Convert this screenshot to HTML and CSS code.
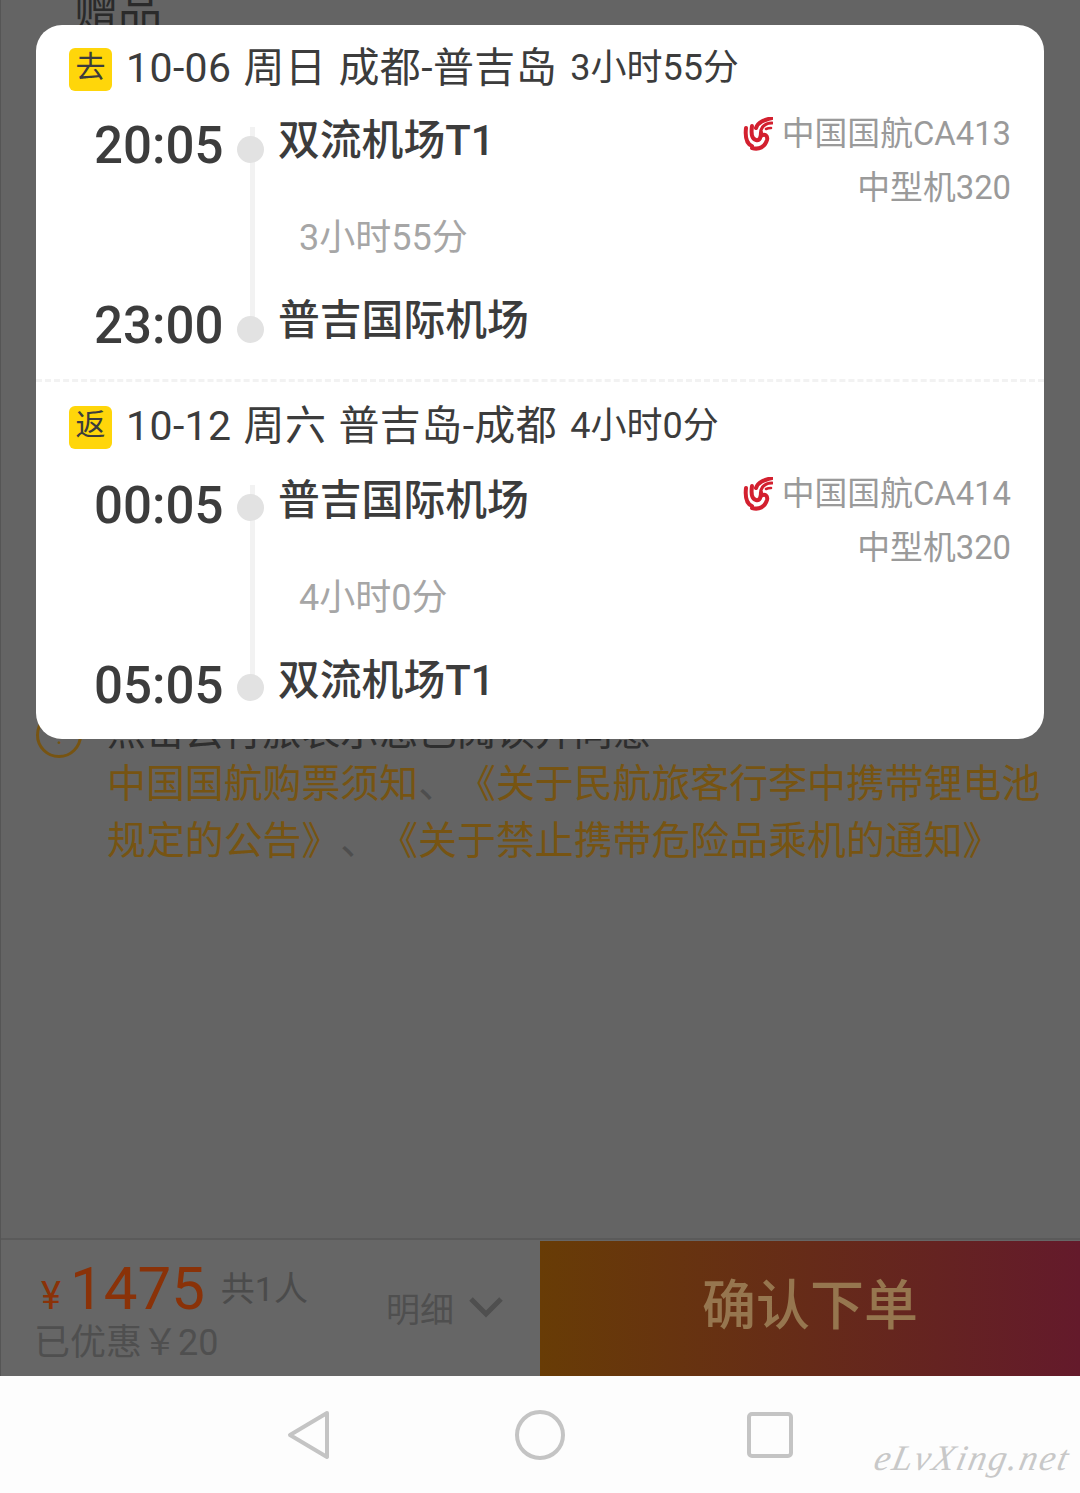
FILE: index.html
```html
<!DOCTYPE html>
<html lang="zh-CN">
<head>
  <meta charset="UTF-8" />
  <meta name="viewport" content="width=device-width, initial-scale=1.0"/>
  <title>确认订单</title>
  <link rel="stylesheet" href="styles.css">
</head>
<body>
  <svg class="defs">
    <symbol id="logo-ca" viewBox="0 0 30 34">
      <g fill="none" stroke="#d3202f" stroke-linecap="round">
        <path stroke-width="4" d="M3 11c-1 9 1 16 6 18"/>
        <path stroke-width="4" d="M9 9c-1 7 0 13 4 14 4 1 5-3 5-8"/>
        <path stroke-width="4" d="M13 11c2-6 8-8 16-10"/>
        <path stroke-width="3.2" d="M18 13c2-5 6-7 11-7"/>
        <path stroke-width="4" d="M9 31c7 2 13-1 15-8 1-4-2-7-6-4"/>
        <path stroke-width="2.6" d="M23 12c2-1 3-1 5-1"/>
      </g>
    </symbol>
  </svg>

  <div class="tela">
    <h2 class="gift">赠品</h2>

    <div class="terms">
      <span class="terms-icon">!</span>
      <div class="terms-text">
        <p class="terms-dark">点击云行旅表示您已阅读并同意</p>
        <p>中国国航购票须知<span class="sep">、</span>《关于民航旅客行李中携带锂电池</p>
        <p>规定的公告》<span class="sep">、</span>《关于禁止携带危险品乘机的通知》</p>
      </div>
    </div>

    <div class="bottom-bar">
      <div class="price-box">
        <div class="price-line">
          <span class="yen">¥</span><span class="price">1475</span><span class="people">共1人</span>
        </div>
        <div class="discount">已优惠￥20</div>
      </div>
      <div class="detail">
        明细
        <svg width="36" height="22" viewBox="0 0 36 22"><path d="M3 3l15 15L33 3" fill="none" stroke="#4f4f4f" stroke-width="5"/></svg>
      </div>
      <div class="confirm">确认下单</div>
    </div>

    <div class="card">
      <section class="segment">
        <div class="seg-head">
          <span class="tag">去</span>
          <span class="seg-title">10-06 周日 成都-普吉岛</span>
          <span class="seg-total">3小时55分</span>
        </div>
        <div class="route">
          <div class="time">20:05</div>
          <div class="rail"><i class="dot"></i><i class="dot"></i></div>
          <div class="airport">双流机场T1</div>
          <div class="carrier">
            <div class="carrier-line"><svg class="logo"><use href="#logo-ca"/></svg>中国国航CA413</div>
            <div class="carrier-line">中型机320</div>
          </div>
          <div class="duration">3小时55分</div>
          <div class="time last">23:00</div>
          <div class="airport last">普吉国际机场</div>
        </div>
      </section>

      <section class="segment back">
        <div class="seg-head">
          <span class="tag">返</span>
          <span class="seg-title">10-12 周六 普吉岛-成都</span>
          <span class="seg-total">4小时0分</span>
        </div>
        <div class="route">
          <div class="time">00:05</div>
          <div class="rail"><i class="dot"></i><i class="dot"></i></div>
          <div class="airport">普吉国际机场</div>
          <div class="carrier">
            <div class="carrier-line"><svg class="logo"><use href="#logo-ca"/></svg>中国国航CA414</div>
            <div class="carrier-line">中型机320</div>
          </div>
          <div class="duration">4小时0分</div>
          <div class="time last">05:05</div>
          <div class="airport last">双流机场T1</div>
        </div>
      </section>
    </div>
  </div>

  <nav class="nav-bar">
    <svg width="46" height="52" viewBox="0 0 46 52"><path d="M41 4L4 26l37 22z" fill="none" stroke="#c4c4c4" stroke-width="4" stroke-linejoin="round"/></svg>
    <svg width="52" height="52" viewBox="0 0 52 52"><circle cx="26" cy="26" r="23" fill="none" stroke="#c4c4c4" stroke-width="4"/></svg>
    <svg width="46" height="46" viewBox="0 0 46 46"><rect x="2" y="2" width="42" height="42" rx="3" fill="none" stroke="#c4c4c4" stroke-width="4"/></svg>
    <span class="watermark">eLvXing.net</span>
  </nav>
</body>
</html>
```

FILE: styles.css
```css
* {
  margin: 0; padding: 0; box-sizing: border-box;
}
html, body {
  height: 100%;
  overflow: hidden;
  font-family: Roboto, "Noto Sans CJK SC", sans-serif;
}
.defs {
  display: none;
}
.tela {
  position: relative;
  display: flex;
  flex-direction: column;
  height: 1376px;
  background: #646464;
  border-left: 1px solid #555;
  overflow: hidden;
}
.gift {
  margin: -16px 0 0 73px;
  font-size: 44px;
  font-weight: 400;
  line-height: 56px;
  color: #2a2a2a;
}

/* texto atras do card */
.terms {
  display: flex;
  margin: 658px 0 0 35px;
}
.terms-icon {
  flex: none;
  width: 46px;
  height: 46px;
  margin-top: 14px;
  border: 3px solid #775412;
  border-radius: 50%;
  color: #775412;
  font-size: 26px;
  line-height: 40px;
  text-align: center;
}
.terms-text {
  margin-left: 25px;
  font-size: 38.9px;
  line-height: 57px;
  color: #775412;
  white-space: nowrap;
  text-spacing-trim: space-all;
}
.terms-dark {
  margin: 5px 0 -5px;
  color: #2e2e2e;
}
.sep {
  color: #4e4e4e;
}

.bottom-bar {
  display: flex;
  align-items: stretch;
  margin-top: auto;
  height: 138px;
  border-top: 2px solid #5a5a5a;
  background: #666;
}
.price-box {
  width: 352px;
  padding: 16px 0 0 35px;
}
.price-line {
  display: flex;
  align-items: baseline;
  height: 65px;
}
.yen {
  font-size: 38px;
  color: #8a3208;
  margin: 0 9px 0 5px;
}
.price {
  font-size: 60px;
  line-height: 66px;
  color: #8a3208;
}
.people {
  margin: 0 0 0 16px;
  position: relative;
  top: -8px;
  font-size: 34px;
  color: #4b4b4b;
}
.discount {
  margin-left: -2px;
  font-size: 36px;
  line-height: 44px;
  color: #4f4f4f;
}
.detail {
  display: flex;
  align-items: center;
  gap: 14px;
  width: 187px;
  padding: 0 0 2px 33px;
  font-size: 34px;
  color: #4f4f4f;
}
.confirm {
  flex: 1;
  margin-top: 1px;
  background: linear-gradient(to right, #683c06, #641a2b);
  color: #96764f;
  font-size: 54px;
  font-weight: 500;
  line-height: 132px;
  text-align: center;
}

/* card por cima */
.card {
  position: absolute;
  left: 35px;
  top: 25px;
  width: 1008px;
  height: 714px;
  background: #fff;
  border-radius: 26px;
  color: #3c3c3c;
  overflow: hidden;
}
.segment {
  height: 354px;
  padding-top: 20px;
}
.segment.back {
  border-top: 3px dashed #f2f2f2;
  padding-top: 21px;
}
.seg-head {
  display: flex;
  align-items: center;
  height: 46px;
  padding-left: 33px;
}
.tag {
  width: 43px;
  height: 43px;
  margin: 2px 14px 0 0;
  background: #ffd60a;
  border-radius: 6px;
  font-size: 30px;
  line-height: 38px;
  text-align: center;
}
.seg-title {
  font-size: 41px;
  line-height: 46px;
  letter-spacing: .4px;
  word-spacing: 1.5px;
  white-space: nowrap;
}
.seg-total {
  margin-left: 13px;
  font-size: 36px;
  line-height: 46px;
}
.route {
  display: grid;
  grid-template-columns: 127px 56px 1fr auto;
  grid-template-rows: 100px 80px 56px;
  margin: 22px 33px 0 59px;
}
.back .route {
  margin-top: 24px;
}
.back .rail {
  margin-top: -2px;
  margin-bottom: 2px;
}
.time {
  grid-column: 1;
  margin-left: -1px;
  padding-top: 3px;
  font-size: 51px;
  font-weight: 500;
  line-height: 60px;
  white-space: nowrap;
}
.time.last {
  grid-row: 3;
}
.rail {
  position: relative;
  grid-column: 2;
  grid-row: 1 / 4;
  display: flex;
  flex-direction: column;
  justify-content: space-between;
  align-items: center;
  padding: 23px 0 6px;
  width: 56px;
}
.rail::before {
  content: "";
  position: absolute;
  left: 28px;
  top: 14px;
  bottom: 19px;
  width: 5px;
  background: #f2f2f2;
}
.dot {
  position: relative;
  display: block;
  width: 27px;
  height: 27px;
  background: #e2e2e2;
  border-radius: 50%;
}
.airport {
  grid-column: 3;
  font-size: 41.8px;
  font-weight: 500;
  line-height: 50px;
  margin-top: 3px;
  white-space: nowrap;
}
.airport.last {
  grid-row: 3;
}
.carrier {
  grid-column: 4;
  grid-row: 1 / 3;
  color: #9a9a9a;
  font-size: 32.8px;
  line-height: 54px;
  text-align: right;
  margin-top: -6px;
}
.carrier-line {
  display: flex;
  align-items: center;
  justify-content: flex-end;
  white-space: nowrap;
}
.logo {
  width: 30px;
  height: 34px;
  margin-right: 9px;
}
.duration {
  grid-column: 3;
  grid-row: 2;
  margin: 3px 0 0 21px;
  font-size: 36px;
  line-height: 44px;
  color: #a6a6a6;
  white-space: nowrap;
}

.nav-bar {
  position: relative;
  display: flex;
  align-items: center;
  height: 117px;
  padding: 0 0 0 286px;
  background: #fdfdfd;
}
.nav-bar svg:nth-child(2) {
  margin-left: 182px;
}
.nav-bar svg:nth-child(3) {
  margin-left: 181px;
}
.watermark {
  position: absolute;
  right: 10px;
  bottom: 14px;
  font-family: "Liberation Serif", serif;
  font-style: italic;
  font-size: 36px;
  letter-spacing: 2px;
  color: #c8c8c8;
  transform: skewX(-12deg);
}
```
